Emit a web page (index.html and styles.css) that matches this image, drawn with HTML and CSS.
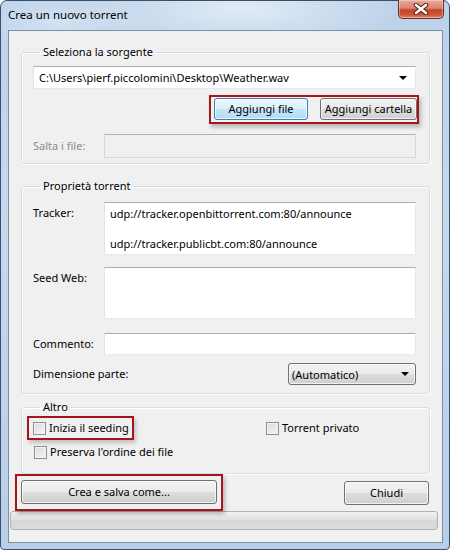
FILE: index.html
```html
<!DOCTYPE html>
<html lang="it">
<head>
    <meta charset="UTF-8">
    <title>Crea un nuovo torrent</title>
    <link rel="stylesheet" href="styles.css">
</head>
<body>
    <div class="window">
        <div class="titlebar">
            <span class="title">Crea un nuovo torrent</span>
            <div class="close">
                <svg width="16" height="12" viewBox="0 0 16 12">
                    <path d="M3 2 L13 10 M13 2 L3 10" stroke="#4a1a12" stroke-width="4.5" stroke-linecap="round"/>
                    <path d="M3 2 L13 10 M13 2 L3 10" stroke="#fff" stroke-width="2.6" stroke-linecap="round"/>
                </svg>
            </div>
        </div>
        <div class="client">
            <fieldset class="group group-source">
                <legend>Seleziona la sorgente</legend>
                <div class="combo-edit">
                    <span>C:\Users\pierf.piccolomini\Desktop\Weather.wav</span>
                    <span class="arrow"></span>
                </div>
                <div class="button-row">
                    <div class="mark mark-add">
                        <button class="btn btn-focus">Aggiungi file</button>
                        <button class="btn btn-folder">Aggiungi cartella</button>
                    </div>
                </div>
                <div class="field-row">
                    <span class="label disabled">Salta i file:</span>
                    <div class="textbox textbox-disabled"></div>
                </div>
            </fieldset>

            <fieldset class="group group-props">
                <legend>Proprietà torrent</legend>
                <div class="field-row top">
                    <span class="label">Tracker:</span>
                    <div class="textbox area tracker">
                        <div>udp://tracker.openbittorrent.com:80/announce</div>
                        <div class="spacer"></div>
                        <div>udp://tracker.publicbt.com:80/announce</div>
                    </div>
                </div>
                <div class="field-row top seeds-row">
                    <span class="label">Seed Web:</span>
                    <div class="textbox area seeds"></div>
                </div>
                <div class="field-row comment-row">
                    <span class="label">Commento:</span>
                    <div class="textbox comment"></div>
                </div>
                <div class="field-row size-row">
                    <span class="label">Dimensione parte:</span>
                    <div class="select">
                        <span>(Automatico)</span>
                        <span class="arrow"></span>
                    </div>
                </div>
            </fieldset>

            <fieldset class="group group-other">
                <legend>Altro</legend>
                <div class="check-row">
                    <div class="mark mark-seed">
                        <span class="checkbox"></span>
                        <span>Inizia il seeding</span>
                    </div>
                    <div class="check private">
                        <span class="checkbox"></span>
                        <span>Torrent privato</span>
                    </div>
                </div>
                <div class="check-row">
                    <div class="check">
                        <span class="checkbox"></span>
                        <span>Preserva l'ordine dei file</span>
                    </div>
                </div>
            </fieldset>

            <div class="bottom-row">
                <div class="mark mark-create">
                    <button class="btn btn-create">Crea e salva come...</button>
                </div>
                <button class="btn btn-close">Chiudi</button>
            </div>
            <div class="progress"></div>
        </div>
    </div>
</body>
</html>
```

FILE: styles.css
```css
body {
    margin: 0;
    font-family: "Noto Sans", "Open Sans", sans-serif;
    font-size: 11px;
    color: #000;
    background: #fff;
}
.window {
    width: 450px;
    height: 550px;
    box-sizing: border-box;
    border: 1px solid #3e4f63;
    border-radius: 7px 7px 4px 4px;
    background:
        radial-gradient(ellipse 160px 40px at 240px 8px, rgba(255,255,255,0.55), rgba(255,255,255,0) 100%),
        radial-gradient(ellipse 90px 30px at 60px 20px, rgba(255,255,255,0.35), rgba(255,255,255,0) 100%),
        linear-gradient(180deg, #bcd2ea 0%, #c5d9ef 40%, #b7cfe9 100%);
    padding: 0 6px 6px 7px;
}
.titlebar {
    height: 29px;
    display: flex;
    align-items: flex-start;
}
.title {
    padding-top: 6px;
    line-height: 16px;
    font-size: 11.5px;
    color: #000;
}
.close {
    margin-left: auto;
    margin-top: -1px;
    margin-right: -1px;
    width: 46px;
    height: 19px;
    box-sizing: border-box;
    border: 1px solid #6e2c22;
    border-top: none;
    border-radius: 0 0 5px 5px;
    background: linear-gradient(180deg, #e9a99a 0%, #dc8370 45%, #c7432a 55%, #cf5a3c 85%, #e0906f 100%);
    box-shadow: inset 0 0 0 1px rgba(255,255,255,0.35);
    display: flex;
    align-items: center;
    justify-content: center;
}
.client {
    height: 513px;
    box-sizing: border-box;
    border: 1px solid #7e8ea2;
    background: #f0f0f0;
    padding: 0;
}
.group {
    margin: 0 12px;
    border: 1px solid #d5dfe5;
    border-radius: 3px;
    box-shadow: inset 1px 1px #fff, 1px 1px #fff;
    padding: 0 13px 0 11px;
}
.group legend {
    padding: 0 3px;
    margin-left: 7px;
    line-height: 16px;
}
.group-source {
    margin-top: 13px;
    padding-top: 6px;
    padding-bottom: 5px;
}
.group-props {
    margin-top: 14px;
    padding-top: 8px;
    padding-bottom: 8px;
}
.group-other {
    margin-top: 5px;
    padding-top: 1px;
    padding-bottom: 9px;
}
.combo-edit {
    height: 23px;
    box-sizing: border-box;
    border: 1px solid #abadb3;
    border-color: #abadb3 #e3e9ef #e3e9ef #e2e3ea;
    background: #fff;
    display: flex;
    align-items: center;
    padding: 0 5px 0 5px;
}
.arrow {
    margin-left: auto;
    width: 0;
    height: 0;
    border-left: 4px solid transparent;
    border-right: 4px solid transparent;
    border-top: 4px solid #000;
    margin-right: 3px;
}
.button-row {
    display: flex;
    justify-content: flex-end;
    margin-top: 6px;
}
.mark {
    border: 2px solid #a3161b;
    box-shadow: 2px 3px 4px rgba(0,0,0,0.25);
}
.mark-add {
    display: flex;
    gap: 12px;
    padding: 1px 0 2px 3px;
    margin-right: -3px;
}
.btn {
    font-family: inherit;
    font-size: 11px;
    color: #000;
    height: 22px;
    box-sizing: border-box;
    border: 1px solid #707070;
    border-radius: 3px;
    background: linear-gradient(180deg, #f2f2f2 0%, #ebebeb 48%, #dddddd 52%, #cfcfcf 100%);
    box-shadow: inset 0 0 0 1px rgba(255,255,255,0.7);
    padding: 0;
    line-height: 18px;
    white-space: nowrap;
}
.btn-focus {
    width: 94px;
    border-color: #3c7fb1;
    background: linear-gradient(180deg, #edf7fd 0%, #dcf0fb 48%, #c4e5f7 52%, #b3dbf2 100%);
}
.btn-folder {
    width: 97px;
}
.field-row {
    display: flex;
    align-items: center;
}
.field-row.top {
    align-items: flex-start;
}
.field-row .label {
    width: 71px;
    line-height: 16px;
}
.field-row.top .label {
    padding-top: 3px;
}
.label.disabled {
    color: #8d8d8d;
}
.group-source .field-row {
    margin-top: 10px;
}
.textbox {
    flex: 1;
    height: 23px;
    box-sizing: border-box;
    border: 1px solid #abadb3;
    border-color: #abadb3 #e3e9ef #e3e9ef #e2e3ea;
    background: #fff;
}
.textbox-disabled {
    height: 24px;
    background: #f0f0f0;
    border-color: #afb3b7 #d6d9dc #d6d9dc #d6d9dc;
}
.area {
    padding: 3px 5px;
    line-height: 16px;
}
.tracker {
    height: 53px;
}
.tracker .spacer {
    height: 14px;
}
.seeds-row {
    margin-top: 12px;
}
.seeds {
    height: 52px;
}
.seeds-row .label {
    padding-top: 2px;
}
.comment-row {
    margin-top: 14px;
}
.comment {
    height: 22px;
}
.size-row {
    margin-top: 8px;
    justify-content: space-between;
}
.size-row .label {
    width: auto;
}
.select {
    width: 128px;
    height: 22px;
    box-sizing: border-box;
    border: 1px solid #707070;
    border-radius: 3px;
    background: linear-gradient(180deg, #f2f2f2 0%, #ebebeb 48%, #dddddd 52%, #cfcfcf 100%);
    box-shadow: inset 0 0 0 1px rgba(255,255,255,0.7);
    display: flex;
    align-items: center;
    padding: 0 3px 0 3px;
}
.check-row {
    display: flex;
    align-items: center;
    height: 24px;
}
.mark-seed,
.check {
    display: flex;
    align-items: center;
    gap: 3px;
    line-height: 16px;
}
.mark-seed {
    width: 107px;
    box-sizing: border-box;
    margin-left: -6px;
    padding: 2px 0 2px 4px;
    box-shadow: 2px 3px 4px rgba(0,0,0,0.2);
}
.check {
    padding-left: 1px;
}
.check.private {
    margin-left: 131px;
}
.checkbox {
    width: 13px;
    height: 13px;
    box-sizing: border-box;
    border: 1px solid #8e8f8f;
    background: linear-gradient(135deg, #dcdcdc, #f4f4f4);
    box-shadow: inset 0 0 0 1px #f4f4f4;
}
.bottom-row {
    display: flex;
    align-items: center;
    justify-content: space-between;
    margin: 0 13px 0 6px;
}
.mark-create {
    padding: 4px 4px 5px 4px;
    box-shadow: 2px 3px 4px rgba(0,0,0,0.25);
}
.btn-create {
    width: 196px;
    height: 24px;
}
.btn-close {
    width: 85px;
    height: 24px;
}
.progress {
    margin: 0 4px 0 1px;
    height: 19px;
    box-sizing: border-box;
    border: 1px solid #b2b2b2;
    border-radius: 3px;
    background: linear-gradient(180deg, #f3f3f3 0%, #e0e0e0 45%, #d6d6d6 55%, #dcdcdc 100%);
}
```
